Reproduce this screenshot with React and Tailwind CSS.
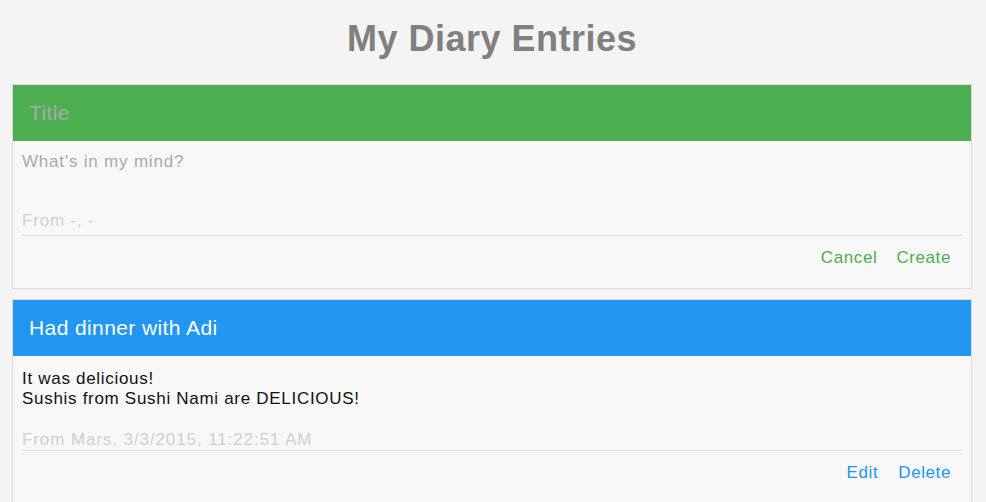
import React from 'react';

const font = { fontFamily: '"Liberation Sans", Arial, sans-serif' };

const NewEntry = () => (
  <div className="border border-[#dddddd] bg-[#f8f8f8]">
    <div className="h-[56px] bg-[#4caf50] px-[16px] flex items-center text-[21px] tracking-[0.4px] text-[#a9a9a9]">
      Title
    </div>
    <div className="px-[9px] pt-[11px] text-[17px] leading-[20px] tracking-[0.8px]">
      <div className="h-[59px] text-[#aaaaaa]">What's in my mind?</div>
      <div className="text-[#d0d0d0] pb-[4px] border-b border-[#dddddd]">From -, -</div>
      <div className="flex justify-end gap-[19px] pt-[12px] pb-[20px] pr-[11px] tracking-[0.6px] text-[#4caf50]">
        <span>Cancel</span>
        <span>Create</span>
      </div>
    </div>
  </div>
);

const Entry = ({ title, lines, from }) => (
  <div className="border border-[#dddddd] bg-[#f8f8f8]">
    <div className="h-[56px] bg-[#2196f3] px-[16px] flex items-center text-[21px] tracking-[0.4px] text-white">
      {title}
    </div>
    <div className="px-[9px] pt-[13px] text-[17px] leading-[20px] tracking-[0.7px]">
      <div className="text-[#111111]">
        {lines.map((l) => (
          <div key={l}>{l}</div>
        ))}
      </div>
      <div className="mt-[21px] text-[#d0d0d0] border-b border-[#dddddd] tracking-[0.9px]">{from}</div>
      <div className="flex justify-end gap-[20px] pt-[12px] pb-[20px] pr-[11px] tracking-[0.6px] text-[#2196f3]">
        <span>Edit</span>
        <span>Delete</span>
      </div>
    </div>
  </div>
);

export default function App() {
  return (
    <div className="min-h-screen bg-[#f4f4f4] pl-[12px] pr-[14px]" style={font}>
      <h1 className="pt-[19px] pb-[25px] text-center text-[36px] leading-[40px] font-bold text-[#808080] tracking-[0.5px]">
        My Diary Entries
      </h1>
      <div className="flex flex-col gap-[10px]">
        <NewEntry />
        <Entry
          title="Had dinner with Adi"
          lines={['It was delicious!', 'Sushis from Sushi Nami are DELICIOUS!']}
          from="From Mars, 3/3/2015, 11:22:51 AM"
        />
      </div>
    </div>
  );
}
